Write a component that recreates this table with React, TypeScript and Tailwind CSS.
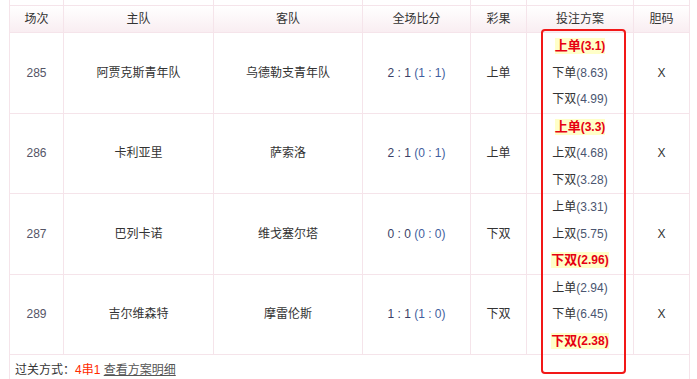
type Pick = { label: string; odds: string; hit?: boolean };

type Match = {
  no: string;
  home: string;
  away: string;
  full: string;
  half: string;
  result: string;
  picks: Pick[];
};

const matches: Match[] = [
  {
    no: "285",
    home: "阿贾克斯青年队",
    away: "乌德勒支青年队",
    full: "2 : 1",
    half: "(1 : 1)",
    result: "上单",
    picks: [
      { label: "上单", odds: "(3.1)", hit: true },
      { label: "下单", odds: "(8.63)" },
      { label: "下双", odds: "(4.99)" },
    ],
  },
  {
    no: "286",
    home: "卡利亚里",
    away: "萨索洛",
    full: "2 : 1",
    half: "(0 : 1)",
    result: "上单",
    picks: [
      { label: "上单", odds: "(3.3)", hit: true },
      { label: "上双", odds: "(4.68)" },
      { label: "下双", odds: "(3.28)" },
    ],
  },
  {
    no: "287",
    home: "巴列卡诺",
    away: "维戈塞尔塔",
    full: "0 : 0",
    half: "(0 : 0)",
    result: "下双",
    picks: [
      { label: "上单", odds: "(3.31)" },
      { label: "上双", odds: "(5.75)" },
      { label: "下双", odds: "(2.96)", hit: true },
    ],
  },
  {
    no: "289",
    home: "吉尔维森特",
    away: "摩雷伦斯",
    full: "1 : 1",
    half: "(1 : 0)",
    result: "下双",
    picks: [
      { label: "上单", odds: "(2.94)" },
      { label: "下单", odds: "(6.45)" },
      { label: "下双", odds: "(2.38)", hit: true },
    ],
  },
];

const cell = "border border-[#f5e4ea] text-center align-middle p-0";

export default function App() {
  return (
    <div
      className="relative w-[697px] h-[379px] overflow-hidden bg-white text-[12px] text-[#333]"
      style={{ fontFamily: '"Liberation Sans", Arial, "Noto Sans CJK SC", sans-serif' }}
    >
      <table className="ml-[9px] -mt-px w-[680px] border-collapse table-fixed">
        <colgroup>
          <col className="w-[54px]" />
          <col className="w-[150px]" />
          <col className="w-[149px]" />
          <col className="w-[108px]" />
          <col className="w-[56px]" />
          <col className="w-[107px]" />
          <col className="w-[56px]" />
        </colgroup>
        <tbody>
          {/* row cut off above the picture */}
          <tr className="h-[6px]">
            {[...Array(7)].map((_, i) => (
              <td key={i} className={cell} />
            ))}
          </tr>
          <tr className="h-[27px] bg-gradient-to-b from-white to-[#f9edf1]">
            {["场次", "主队", "客队", "全场比分", "彩果", "投注方案", "胆码"].map((h) => (
              <td key={h} className={cell}>
                {h}
              </td>
            ))}
          </tr>
          {matches.map((m) => (
            <tr key={m.no} className="h-[80px]">
              <td className={`${cell} text-[#556]`}>{m.no}</td>
              <td className={cell}>{m.home}</td>
              <td className={cell}>{m.away}</td>
              <td className={`${cell} text-[#3a3f66]`}>
                {m.full} <span className="text-[#3f5e9e]">{m.half}</span>
              </td>
              <td className={cell}>{m.result}</td>
              <td className={cell}>
                <div className="flex flex-col items-center">
                  {m.picks.map((p) => (
                    <div key={p.label + p.odds} className="h-[26.5px] flex items-center">
                      {p.hit ? (
                        <span className="bg-[#ffffc8] font-bold text-[#e60012] leading-[15px]">
                          <span className="text-[13px]">{p.label}</span>
                          <span className="text-[12px]">{p.odds}</span>
                        </span>
                      ) : (
                        <span>
                          <span>{p.label}</span>
                          <span className="text-[#4a5570]">{p.odds}</span>
                        </span>
                      )}
                    </div>
                  ))}
                </div>
              </td>
              <td className={cell}>X</td>
            </tr>
          ))}
          <tr className="h-[40px]">
            <td colSpan={7} className="border border-[#f5e4ea] align-top pl-[5px] pt-[6px]">
              过关方式：<span className="text-[#ff2a00]">4串1</span>{" "}
              <a className="underline text-[#555]">查看方案明细</a>
            </td>
          </tr>
        </tbody>
      </table>

      {/* annotation box */}
      <div className="absolute left-[541px] top-[29px] w-[85px] h-[345px] border-2 border-[#f21818] rounded-[4px]" />
    </div>
  );
}
